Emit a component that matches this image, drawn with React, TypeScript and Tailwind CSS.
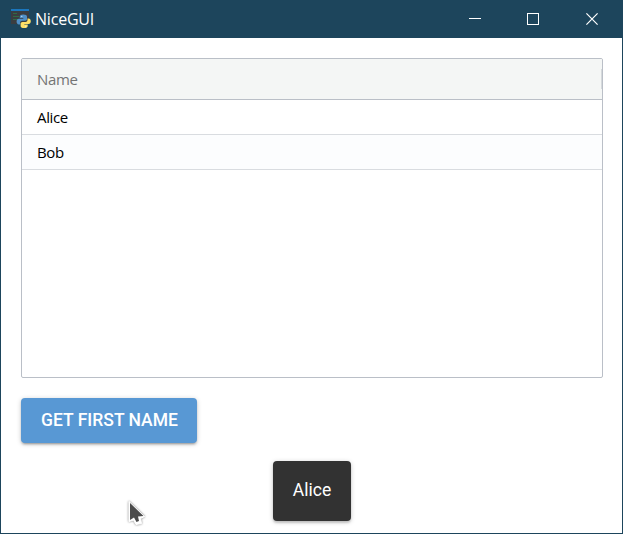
function AppIcon() {
  return (
    <svg className="h-[20px] w-[20px] shrink-0" viewBox="0 0 20 20">
      <rect x="0" y="0" width="18" height="15" fill="#3a3d40" />
      <rect x="0" y="0" width="18" height="2" fill="#1b76bd" />
      <path d="M2 4.500h4M2 7.500h6M2 10.500h5" stroke="#2f6b45" strokeWidth="1" />
      <path
        d="M12.200 5.500c-2.600 0-3.400 1-3.400 2.200v1.400h3.500v.6H7.900c-1.500 0-2.300 1.200-2.300 2.800s.8 2.900 2.200 2.900h1.300v-1.700c0-1.200.9-2 2.100-2h3c1.100 0 1.800-.8 1.800-1.700V7.700c0-1.300-1.300-2.200-3.800-2.200z"
        fill="#4f8fc6"
      />
      <path
        d="M13.200 19c2.600 0 3.500-.9 3.500-2.100v-1.300h-3.400v-.6h4.300c1.400 0 2.200-1.200 2.200-2.800s-.8-2.800-2.200-2.800h-1.100v1.500c0 1.200-.9 2-2 2h-2.900c-1.200 0-2 .8-2 1.800v2.200c0 1.300 1.200 2.100 3.600 2.100z"
        fill="#ffdf66"
      />
      <circle cx="10.800" cy="7.300" r="0.600" fill="#e8f1f8" />
      <circle cx="14.800" cy="17.200" r="0.600" fill="#fff7d0" />
    </svg>
  );
}

function TitleBar() {
  return (
    <header className="flex h-[38px] shrink-0 items-center bg-[#1d455c] pl-[11px] text-white">
      <AppIcon />
      <span className="ml-[4px] font-['Open_Sans',sans-serif] text-[16px] leading-[20px] tracking-[-0.2px]">NiceGUI</span>
      <div className="ml-auto flex h-full">
        <button className="flex w-[58px] items-center justify-center">
          <svg className="h-3 w-3" viewBox="0 0 12 12" shapeRendering="crispEdges">
            <path d="M0 5.500h12" stroke="white" />
          </svg>
        </button>
        <button className="flex w-[58px] items-center justify-center">
          <span className="h-3 w-3 border border-white" />
        </button>
        <button className="mr-[2px] flex w-[59px] items-center justify-center">
          <svg className="h-3 w-3" viewBox="0 0 12 12">
            <path d="M.4.4l11.200 11.200M11.600.4L.4 11.600" stroke="white" strokeWidth="1.200" />
          </svg>
        </button>
      </div>
    </header>
  );
}

const rows = ["Alice", "Bob"];

function NameGrid() {
  return (
    <div className="h-[320px] overflow-hidden rounded-[2px] border border-[#babfc7] font-['Open_Sans',sans-serif] text-[15px] leading-[20px] tracking-[-0.35px]">
      <div className="flex h-[41px] items-center justify-between border-b border-[#babfc7] bg-[#f4f6f5] pl-[15px] text-[#737474]">
        <span>Name</span>
        <span className="h-5 w-px bg-[#d5d9dc]" />
      </div>
      {rows.map((name, index) => (
        <div
          key={name}
          className={`flex h-[35px] items-center border-b border-[#d9dce0] pl-[15px] text-black ${
            index % 2 === 0 ? "bg-white" : "bg-[#fcfdfe]"
          }`}
        >
          {name}
        </div>
      ))}
    </div>
  );
}

function Pointer() {
  return (
    <svg className="absolute left-[126px] top-[498px] h-[30px] w-[22px]" viewBox="0 0 22 30">
      <g className="drop-shadow-[0_0_1px_rgba(0,0,0,0.5)]">
        <path
          d="M3 3.500v20l4.500-1.500 2.500 4.500 5.500-1-1-5 4-2z"
          fill="white"
          stroke="white"
          strokeLinejoin="round"
        />
        <path d="M4 5v17l4-2.500 2.500 4.500 2.500-1-1-4.500 5.500-.5z" fill="#4b4b4b" />
      </g>
    </svg>
  );
}

export default function App() {
  return (
    <div className="relative flex h-[534px] w-[623px] flex-col overflow-hidden bg-[#1d455c]">
      <TitleBar />
      <main className="mx-px mb-px flex flex-1 flex-col bg-white pl-[20px] pr-[19px] pt-[20px]">
        <NameGrid />
        <button className="mt-[20px] flex h-[45px] w-[176px] items-center justify-center rounded-[4px] bg-[#5898d4] pl-[1px] font-['Roboto',sans-serif] text-[17.500px] font-medium whitespace-nowrap text-white shadow-[0_1px_5px_rgba(0,0,0,0.2),0_2px_2px_rgba(0,0,0,0.14),0_3px_1px_-2px_rgba(0,0,0,0.12)]">
          GET FIRST NAME
        </button>
      </main>
      <div
        role="alert"
        className="absolute left-[273px] top-[461px] flex h-[60px] w-[78px] items-center justify-center rounded-[4px] bg-[#323232] pb-[2px] font-['Roboto',sans-serif] text-[17.500px] text-white shadow-[0_1px_5px_rgba(0,0,0,0.2),0_2px_2px_rgba(0,0,0,0.14)]"
      >
        Alice
      </div>
      <Pointer />
    </div>
  );
}
